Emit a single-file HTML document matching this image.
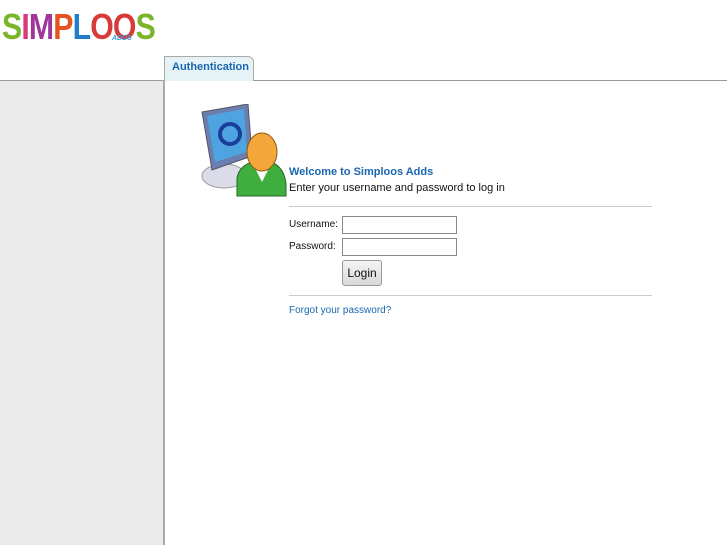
<!DOCTYPE html>
<html><head><meta charset="utf-8"><style>
*{margin:0;padding:0;box-sizing:border-box}
body{width:727px;height:545px;background:#fff;font-family:"Liberation Sans",sans-serif;position:relative;overflow:hidden}
.abs{position:absolute}
</style></head><body>
<div class="abs" style="left:2px;top:6px;font:bold 36px 'Liberation Sans',sans-serif;letter-spacing:-1px;transform:scaleX(0.84);transform-origin:0 0;white-space:nowrap">
<span style="color:#7bb52c">S</span><span style="color:#d83a7a">I</span><span style="color:#a0369a">M</span><span style="color:#e8521f">P</span><span style="color:#1f7dc9">L</span><span style="color:#d83a3a">O</span><span style="color:#d83a3a">O</span><span style="color:#7bb52c">S</span></div>
<div class="abs" style="left:112px;top:35px;font:bold italic 7px 'Liberation Sans',sans-serif;color:#3aa0e0">ADDS</div>
<div class="abs" style="left:0;top:80px;width:727px;height:1px;background:#999"></div>
<div class="abs" style="left:0;top:81px;width:163px;height:464px;background:#ebebeb"></div>
<div class="abs" style="left:163px;top:80px;width:2px;height:465px;background:#aaa"></div>
<div class="abs" style="left:164px;top:56px;width:90px;height:25px;background:#e5f2f6;border:1px solid #aaa;border-bottom:none;border-top-right-radius:6px;font:bold 11px 'Liberation Sans',sans-serif;color:#1a66b0;padding:4px 0 0 7px">Authentication</div>
<svg class="abs" style="left:200px;top:104px" width="90" height="94" viewBox="0 0 90 94">
<ellipse cx="24" cy="72" rx="22" ry="12" fill="#dcdce8" stroke="#999"/>
<path d="M2 8 L48 0 L52 52 L12 66 Z" fill="#6a7fb0" stroke="#556"/>
<path d="M7 12 L44 5 L47 48 L15 58 Z" fill="#4ea4e0"/>
<circle cx="30" cy="30" r="10" fill="none" stroke="#1a3f9a" stroke-width="4"/>
<path d="M37 74 Q40 58 62 56 Q84 58 86 80 L86 92 L37 92 Z" fill="#3fae3f" stroke="#206a20"/>
<path d="M52 58 L62 78 L72 58" fill="#fff"/>
<ellipse cx="62" cy="48" rx="15" ry="19" fill="#f3a63a" stroke="#8a5a10"/>
</svg>
<div class="abs" style="left:289px;top:166px;font:bold 11px 'Liberation Sans',sans-serif;color:#1a66b0">Welcome to Simploos Adds</div>
<div class="abs" style="left:289px;top:182px;font-size:11px;color:#111">Enter your username and password to log in</div>
<div class="abs" style="left:289px;top:206px;width:363px;height:1px;background:#ccc"></div>
<div class="abs" style="left:289px;top:219px;font-size:10px;color:#111">Username:</div>
<div class="abs" style="left:342px;top:216px;width:115px;height:18px;border:1px solid #888;background:#fff"></div>
<div class="abs" style="left:289px;top:241px;font-size:10px;color:#111">Password:</div>
<div class="abs" style="left:342px;top:238px;width:115px;height:18px;border:1px solid #888;background:#fff"></div>
<div class="abs" style="left:342px;top:260px;width:40px;height:26px;border:1px solid #999;border-radius:3px;background:linear-gradient(#f4f4f4,#d8d8d8);font-size:12px;color:#111;text-align:center;line-height:24px">Login</div>
<div class="abs" style="left:289px;top:295px;width:363px;height:1px;background:#ccc"></div>
<div class="abs" style="left:289px;top:305px;font-size:10px;color:#1a66b0">Forgot your password?</div>
</body></html>
